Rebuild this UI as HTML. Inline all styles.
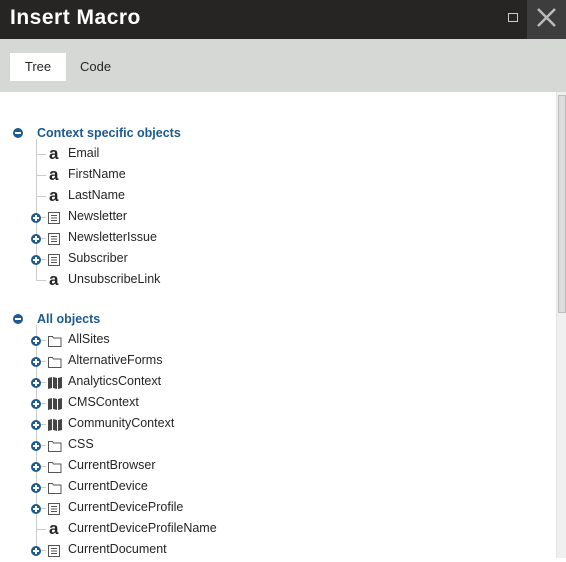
<!DOCTYPE html>
<html><head><style>
body{margin:0;width:566px;height:558px;overflow:hidden;background:#fff;font-family:"Liberation Sans",sans-serif;position:relative}
.hd{position:absolute;left:0;top:0;width:566px;height:39px;background:#262524}
.hd h1{position:absolute;left:10px;top:6px;margin:0;font-size:21px;color:#fff;font-weight:bold;letter-spacing:0.5px}
.cl{position:absolute;left:527px;top:0;width:39px;height:39px;background:#3d3d3d}
.mx{position:absolute;left:508px;top:13px;width:8px;height:7px;border:1.5px solid #ccc}
.tb{position:absolute;left:0;top:39px;width:566px;height:53px;background:#d6d8d5}
.tab{position:absolute;top:14px;height:28px;line-height:28px;font-size:13px;color:#262524}
.sb{position:absolute;left:556px;top:92px;width:10px;height:466px;background:#f0f0f0;border-left:1px solid #e4e4e4}
.th{position:absolute;left:558px;top:95px;width:8px;height:218px;background:#dcdcdc;border:1px solid #bdbdbd;box-sizing:border-box}
.r{position:absolute;font-size:12.5px;color:#262524;white-space:nowrap;line-height:16px}
.h{position:absolute;font-size:12.5px;color:#1c5a8f;font-weight:bold;line-height:16px}
.m{position:absolute;width:10px;height:10px;border-radius:50%;background:#1c5a8f}
.m:after{content:"";position:absolute;left:2px;top:4px;width:6px;height:2px;background:#fff}
.p{position:absolute;width:10px;height:10px;border-radius:50%;background:#1c5a8f}
.p:after{content:"";position:absolute;left:2px;top:4px;width:6px;height:2px;background:#fff}
.p:before{content:"";position:absolute;left:4px;top:2px;width:2px;height:6px;background:#fff}
.vl{position:absolute;width:1px;background:#ccc;left:36px}
.hl{position:absolute;height:1px;background:#ccc}
.ic{position:absolute}
</style></head><body>
<div class="hd"><h1>Insert Macro</h1><div class="mx"></div><div class="cl">
<svg width="39" height="39"><path d="M11 9L28 26M28 9L11 26" stroke="#bbb" stroke-width="2.5"/></svg></div></div>
<div class="tb"><div class="tab" style="left:10px;width:56px;background:#fff;text-align:center">Tree</div><div class="tab" style="left:80px">Code</div></div>
<div class="sb"></div><div class="th"></div>
<div id="t"></div>
<script>
var A='<svg width="14" height="16"><text x="1" y="13" font-family="Liberation Sans" font-weight="bold" font-size="17" fill="#262524">a</text></svg>';
var L='<svg width="12" height="12"><rect x="0.5" y="0.5" width="11" height="11" fill="none" stroke="#555"/><path d="M3 3.5h6M3 6h6M3 8.5h6" stroke="#555"/></svg>';
var F='<svg width="14" height="12"><path d="M0.5 1.5h4l1 1.5h7.5v8.5h-12.5z" fill="none" stroke="#555"/></svg>';
var M='<svg width="14" height="12"><path d="M0 1l4 -1v11l-4 1zM5 0l4 1v11l-4-1zM10 1l4-1v11l-4 1z" fill="#444"/></svg>';
var h='';
function grp(y,title,items){
 h+='<div class="m" style="left:13px;top:'+(y-5)+'px"></div><div class="h" style="left:37px;top:'+(y-8)+'px">'+title+'</div>';
 var last=y+21*items.length;
 h+='<div class="vl" style="top:'+(y+6)+'px;height:'+(Math.min(last,558)-y-6)+'px"></div>';
 items.forEach(function(it,i){var cy=y+21*(i+1);
  h+='<div class="hl" style="left:36px;top:'+cy+'px;width:10px"></div>';
  if(it[1]!=A)h+='<div class="p" style="left:31px;top:'+(cy-4)+'px"></div>';
  h+='<div class="ic" style="left:48px;top:'+(cy-(it[1]==A?8:6))+'px">'+it[1]+'</div>';
  h+='<div class="r" style="left:68px;top:'+(cy-9)+'px">'+it[0]+'</div>';});
}
grp(133,'Context specific objects',[['Email',A],['FirstName',A],['LastName',A],['Newsletter',L],['NewsletterIssue',L],['Subscriber',L],['UnsubscribeLink',A]]);
grp(319,'All objects',[['AllSites',F],['AlternativeForms',F],['AnalyticsContext',M],['CMSContext',M],['CommunityContext',M],['CSS',F],['CurrentBrowser',F],['CurrentDevice',F],['CurrentDeviceProfile',L],['CurrentDeviceProfileName',A],['CurrentDocument',L]]);
document.getElementById('t').innerHTML=h;
</script>
</body></html>
